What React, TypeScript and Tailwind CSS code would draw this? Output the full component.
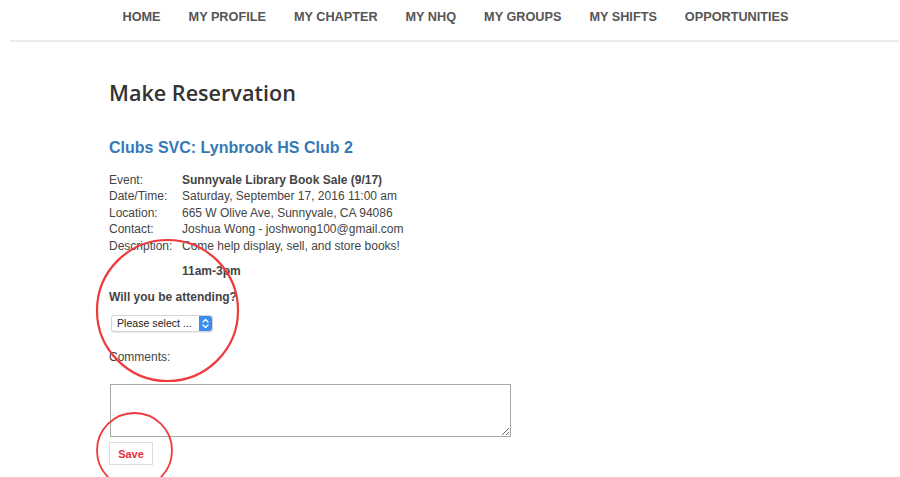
import React from 'react';

const navItems = ['HOME', 'MY PROFILE', 'MY CHAPTER', 'MY NHQ', 'MY GROUPS', 'MY SHIFTS', 'OPPORTUNITIES'];

const details: { label: string; value: string; bold?: boolean }[] = [
  { label: 'Event:', value: 'Sunnyvale Library Book Sale (9/17)', bold: true },
  { label: 'Date/Time:', value: 'Saturday, September 17, 2016 11:00 am' },
  { label: 'Location:', value: '665 W Olive Ave, Sunnyvale, CA 94086' },
  { label: 'Contact:', value: 'Joshua Wong - joshwong100@gmail.com' },
];

function Stepper() {
  return (
    <div className="flex h-full w-[13px] items-center justify-center rounded-r-[3px] bg-[#3b8ef0]">
      <svg width="7" height="11" viewBox="0 0 7 11" fill="none" stroke="white" strokeWidth="1.3" strokeLinecap="round" strokeLinejoin="round">
        <path d="M1 4 L3.5 1.5 L6 4" />
        <path d="M1 7 L3.5 9.5 L6 7" />
      </svg>
    </div>
  );
}

export default function App() {
  return (
    <div className="relative h-[477px] w-[900px] overflow-hidden bg-white font-['Liberation_Sans',Arial,sans-serif] text-[#444]">
      {/* Top nav */}
      <div className="ml-[10px] mr-px flex h-[42px] items-center justify-center gap-[28px] border-b-2 border-[#ebebeb] pb-[4px] pl-[2px] text-[12.7px] font-bold text-[#555]">
        {navItems.map((item) => (
          <span key={item}>{item}</span>
        ))}
      </div>

      <div className="pl-[109px]">
        <h1 className="mt-[36px] font-['Open_Sans',sans-serif] text-[21.6px] font-semibold leading-[30px] text-[#333]">
          Make Reservation
        </h1>

        <h2 className="mt-[30px] text-[16px] font-bold leading-[20px] text-[#337ab7]">Clubs SVC: Lynbrook HS Club 2</h2>

        {/* Event details */}
        <div className="mt-[14px] text-[12px] leading-[16.4px]">
          {details.map((d) => (
            <div key={d.label} className="flex">
              <span className="w-[73px] shrink-0">{d.label}</span>
              <span className={d.bold ? 'font-bold' : ''}>{d.value}</span>
            </div>
          ))}
          <div className="flex">
            <span className="w-[73px] shrink-0">Description:</span>
            <div>
              <p>Come help display, sell, and store books!</p>
              <p className="mt-[9px] font-bold">11am-3pm</p>
            </div>
          </div>
        </div>

        <p className="mt-[10px] text-[12px] font-bold leading-[16px]">Will you be attending?</p>

        <div className="ml-[2px] mt-[10px] flex h-[17px] w-[102px] items-stretch rounded-[3px] border border-[#d4d4d4] bg-white shadow-[0_1px_1px_rgba(0,0,0,0.08)]">
          <span className="flex-1 pl-[5px] text-[10.6px] leading-[15px] text-[#222]">Please select ...</span>
          <Stepper />
        </div>

        <p className="mt-[17px] text-[12px] leading-[16px]">Comments:</p>

        <textarea className="ml-[1px] mt-[19px] block h-[53px] w-[401px] resize-y border border-[#a9a9a9] bg-white" />

        <button className="mt-[5px] h-[23px] w-[44px] border border-[#dcdcdc] bg-white text-[11px] font-bold text-[#e8313d]">
          Save
        </button>
      </div>

      {/* Annotation circles */}
      <svg className="pointer-events-none absolute left-0 top-0" width="900" height="477">
        <circle cx="167.5" cy="310.5" r="70.5" fill="none" stroke="#ee3a3c" strokeWidth="2.2" />
        <circle cx="134.5" cy="450.5" r="37.5" fill="none" stroke="#ee3a3c" strokeWidth="1.8" />
      </svg>
    </div>
  );
}
